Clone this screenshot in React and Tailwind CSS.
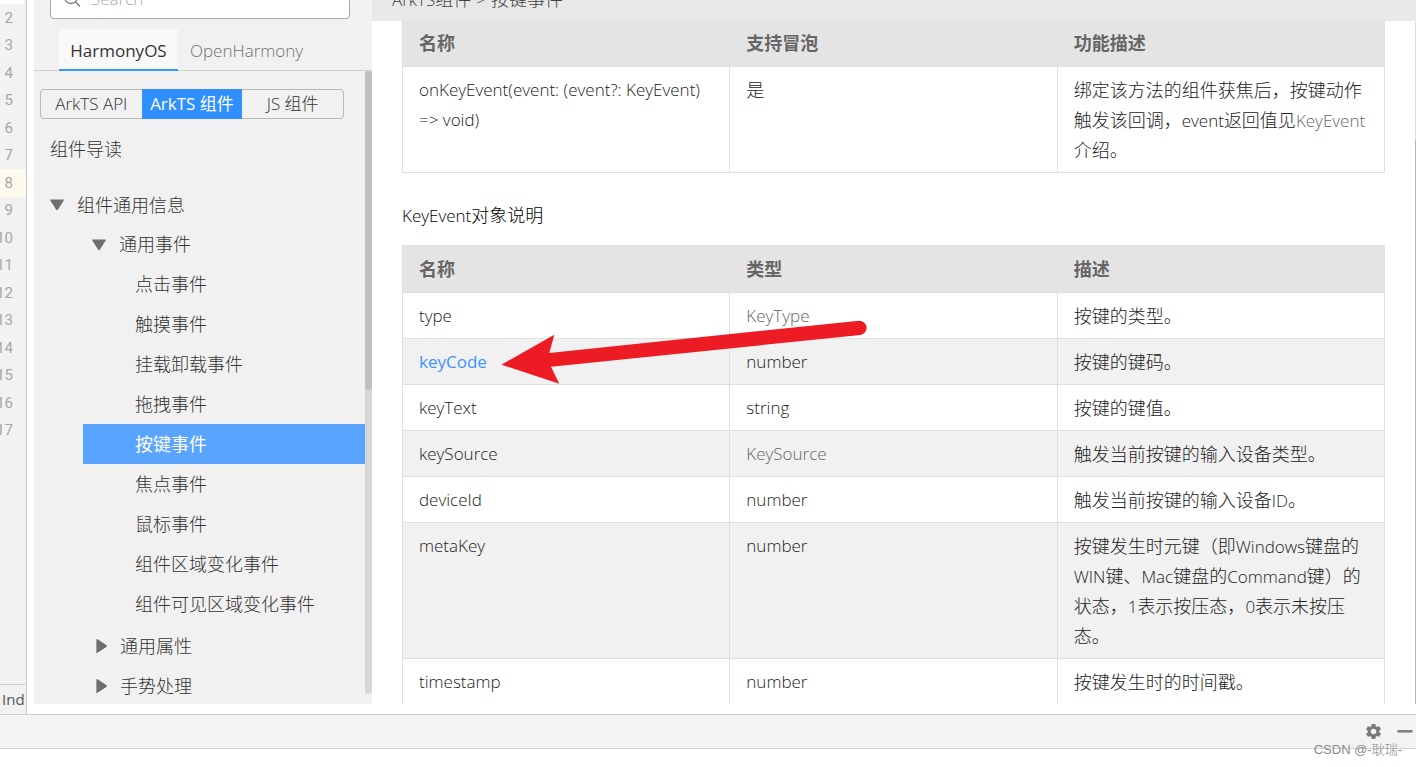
import React, { useState } from "react";
import { MdSettings } from "react-icons/md";

const lineNumbers = [2, 3, 4, 5, 6, 7, 8, 9, 10, 11, 12, 13, 14, 15, 16, 17];

const eventItems = [
  "点击事件",
  "触摸事件",
  "挂载卸载事件",
  "拖拽事件",
  "按键事件",
  "焦点事件",
  "鼠标事件",
  "组件区域变化事件",
  "组件可见区域变化事件",
];

// latin words sit one pixel smaller than the chinese text around them
const Latin = ({ children }) => (
  <span className="text-[17px] leading-none">{children}</span>
);

const keyEventRows = [
  { name: "type", type: "KeyType", typeLink: true, desc: "按键的类型。" },
  { name: "keyCode", nameLink: true, type: "number", desc: "按键的键码。" },
  { name: "keyText", type: "string", desc: "按键的键值。" },
  {
    name: "keySource",
    type: "KeySource",
    typeLink: true,
    desc: "触发当前按键的输入设备类型。",
  },
  {
    name: "deviceId",
    type: "number",
    desc: (
      <>
        触发当前按键的输入设备<Latin>ID</Latin>。
      </>
    ),
  },
  {
    name: "metaKey",
    type: "number",
    desc: (
      <>
        按键发生时元键（即<Latin>Windows</Latin>键盘的<Latin>WIN</Latin>键、
        <Latin>Mac</Latin>键盘的<Latin>Command</Latin>键）的状态，
        <Latin>1</Latin>表示按压态，<Latin>0</Latin>表示未按压态。
      </>
    ),
  },
  { name: "timestamp", type: "number", desc: "按键发生时的时间戳。" },
];

const Triangle = ({ open }) => (
  <svg
    viewBox="0 0 16 16"
    className={open ? "w-4 h-4 shrink-0" : "w-4 h-4 shrink-0 -rotate-90"}
  >
    <path
      d="M1.8 2.4h12.4q1.2 0 .5 1L9 12.4q-1 1.2-2 0L1.3 3.4q-.7-1 .5-1z"
      fill="#6e6e6e"
    />
  </svg>
);

const Gutter = () => (
  <aside className="flex w-[27px] shrink-0 flex-col justify-between overflow-hidden border-r border-[#c9c9c9] bg-[#f2f2f2]">
    <div className="flex flex-col">
      <div className="h-1 w-6 rounded-br bg-white" />
      <ol className="flex h-[440px] flex-col">
        {lineNumbers.map((n) => (
          <li
            key={n}
            className={
              n === 8
                ? "flex flex-1 items-center bg-[#fcfaed]"
                : "flex flex-1 items-center"
            }
          >
            <span className="flex w-[13px] justify-end font-[Roboto] text-[15px] font-normal text-[#a6a6a6]">
              {n}
            </span>
          </li>
        ))}
      </ol>
    </div>
    <div className="flex h-[30px] items-center border-t border-[#d1d1d1] pl-0.5 text-[15px] font-normal text-[#555555]">
      Ind
    </div>
  </aside>
);

const Sidebar = () => {
  const [selected, setSelected] = useState("按键事件");

  return (
    <nav className="flex w-[338px] shrink-0 flex-col overflow-hidden bg-[#f1f1f1] text-[#333333]">
      <label className="-mt-[21px] ml-4 flex h-10 w-[300px] shrink-0 items-center rounded-sm border border-[#a9a9a9] bg-white pl-3">
        <svg viewBox="0 0 20 20" className="h-5 w-5 shrink-0" fill="none">
          <circle cx="8" cy="8" r="6.5" stroke="#777" strokeWidth="1.3" />
          <path d="M12.5 13l4.5 4.5" stroke="#777" strokeWidth="1.3" />
        </svg>
        <input
          type="text"
          aria-label="Search"
          placeholder="Search"
          className="w-full pl-2 text-[17px] outline-none placeholder:text-[#aaaaaa]"
        />
      </label>

      <div className="mt-2.5 flex h-[42px] shrink-0 border-b border-[#cfcfcf] pl-[25px] text-[17px]">
        <button
          type="button"
          className="-mb-px w-[119px] border-b-2 border-[#3d94ff] bg-[#f8f8f8] pt-1 font-normal text-[#333333]"
        >
          HarmonyOS
        </button>
        <button type="button" className="px-3 pt-0.5 text-[#707070]">
          OpenHarmony
        </button>
      </div>

      <div className="flex min-h-0 flex-1">
        <div className="flex min-w-0 flex-1 flex-col overflow-hidden pt-[18px]">
          <div className="mx-1.5 mr-[21px] grid h-[30px] shrink-0 grid-cols-3 rounded-sm border border-[#b9b9b9] text-[17px]">
            <button type="button">ArkTS API</button>
            <button
              type="button"
              className="-my-px bg-[#2f8fff] font-normal text-white"
            >
              ArkTS 组件
            </button>
            <button type="button">JS 组件</button>
          </div>

          <a
            href="#guide"
            className="mt-2.5 flex h-10 shrink-0 items-center pl-4 text-[18px]"
          >
            组件导读
          </a>

          <div className="mt-4 flex h-10 shrink-0 items-center gap-3 pl-[15px] text-[18px]">
            <Triangle open />
            <span>组件通用信息</span>
          </div>
          <div className="flex h-[39px] shrink-0 items-center gap-3 pl-[57px] text-[18px]">
            <Triangle open />
            <span>通用事件</span>
          </div>

          <ul className="shrink-0 pl-[49px]">
            {eventItems.map((item) => (
              <li key={item}>
                <button
                  type="button"
                  onClick={() => setSelected(item)}
                  className={
                    item === selected
                      ? "flex h-10 w-full items-center bg-[#59a4ff] pl-13 text-[18px] font-normal text-white"
                      : "flex h-10 w-full items-center pl-13 text-[18px]"
                  }
                >
                  {item}
                </button>
              </li>
            ))}
          </ul>

          <div className="mt-0.5 flex h-10 shrink-0 items-center gap-2.5 pl-[60px] text-[18px]">
            <Triangle />
            <span>通用属性</span>
          </div>
          <div className="flex h-10 shrink-0 items-center gap-2.5 pl-[60px] text-[18px]">
            <Triangle />
            <span>手势处理</span>
          </div>
        </div>

        {/* scrollbar */}
        <div className="mb-2.5 w-[7px] shrink-0 rounded-b bg-[#d6d6d6]">
          <div className="h-[319px] rounded bg-[#bfbfbf]" />
        </div>
      </div>
    </nav>
  );
};

const Th = ({ children }) => (
  <th className="border border-[#dfdfdf] px-4 py-2 text-left text-[18px] leading-[30px] font-bold text-[#666666]">
    {children}
  </th>
);

const Td = ({ children, cjk }) => (
  <td
    className={
      cjk
        ? "border border-[#dfdfdf] px-4 pt-2 pb-[7px] align-top text-[18px] leading-[30px]"
        : "border border-[#dfdfdf] px-4 pt-2 pb-[7px] align-top text-[17px] leading-[30px]"
    }
  >
    {children}
  </td>
);

const Content = () => (
  <main className="flex min-w-0 flex-1 flex-col overflow-hidden">
    <div className="flex h-[21px] shrink-0 items-end bg-[#e8e8e8] pl-5">
      <p className="mb-2.5 text-[18px] leading-6 text-[#444444]">
        <Latin>ArkTS</Latin>组件 &gt; 按键事件
      </p>
    </div>

    <div className="flex min-h-0 flex-1">
      <div className="min-w-0 flex-1 overflow-hidden pr-[30px] pl-[30px] text-[#222222]">
        <table className="-mt-0.5 w-full table-fixed border-collapse">
          <thead>
            <tr className="bg-[#e4e4e4]">
              <Th>名称</Th>
              <Th>支持冒泡</Th>
              <Th>功能描述</Th>
            </tr>
          </thead>
          <tbody>
            <tr>
              <Td>onKeyEvent(event: (event?: KeyEvent) =&gt; void)</Td>
              <Td cjk>是</Td>
              <Td cjk>
                绑定该方法的组件获焦后，按键动作触发该回调，
                <Latin>event</Latin>返回值见
                <a href="#keyevent" className="text-[#666666]">
                  <Latin>KeyEvent</Latin>
                </a>
                介绍。
              </Td>
            </tr>
          </tbody>
        </table>

        <p
          id="keyevent"
          className="mt-[27px] mb-[15px] text-[18px] leading-[30px] text-black"
        >
          <Latin>KeyEvent</Latin>对象说明
        </p>

        <div className="relative">
          <table className="w-full table-fixed border-collapse">
            <thead>
              <tr className="bg-[#e4e4e4]">
                <Th>名称</Th>
                <Th>类型</Th>
                <Th>描述</Th>
              </tr>
            </thead>
            <tbody>
              {keyEventRows.map((row) => (
                <tr key={row.name} className="even:bg-[#f1f1f1]">
                  <Td>
                    {row.nameLink ? (
                      <a href="#keycode" className="font-normal text-[#3d94ff]">
                        {row.name}
                      </a>
                    ) : (
                      row.name
                    )}
                  </Td>
                  <Td>
                    {row.typeLink ? (
                      <a href="#keytype" className="text-[#666666]">
                        {row.type}
                      </a>
                    ) : (
                      row.type
                    )}
                  </Td>
                  <Td cjk>{row.desc}</Td>
                </tr>
              ))}
            </tbody>
          </table>

          {/* arrow pointing at keyCode */}
          <svg
            viewBox="0 0 370 70"
            className="pointer-events-none absolute top-[73px] left-[97px] h-[70px] w-[370px]"
          >
            <path
              d="M2.5 46.7L55.3 16.7L50.3 35L360 2.7A7.2 7.2 0 0 1 361.5 17L52 48.7L60.3 65.7Z"
              fill="#ed1c24"
            />
          </svg>
        </div>
      </div>

      <div className="w-px shrink-0 bg-[#dddddd] pt-[119px]">
        <div className="h-full bg-[#b5b5b5]" />
      </div>
    </div>
  </main>
);

const App = () => (
  <div className="flex h-screen flex-col overflow-hidden bg-white font-['Open_Sans','Noto_Sans_CJK_SC',sans-serif] font-light">
    <div className="flex min-h-0 flex-1">
      <Gutter />
      <div className="flex min-w-0 flex-1 pb-2.5 pl-[7px]">
        <Sidebar />
        <Content />
      </div>
    </div>

    <footer className="relative shrink-0 pb-[18px]">
      <div className="flex h-[35px] items-center justify-end gap-3.5 border-y border-[#d1d1d1] bg-[#f3f3f3] pr-[3px]">
        <button type="button" aria-label="Settings">
          <MdSettings className="h-[19px] w-[19px] text-[#7a7a7a]" />
        </button>
        <button type="button" aria-label="Hide">
          <svg viewBox="0 0 16 16" className="h-4 w-4">
            <path d="M0.5 6h15v2.6h-15z" fill="#7f7f7f" />
          </svg>
        </button>
      </div>
      <span className="absolute right-3.5 bottom-[7px] font-['Liberation_Sans','Noto_Sans_CJK_SC',sans-serif] text-[13px] leading-5 text-[#8c8c8c]">
        CSDN @-耿瑞-
      </span>
    </footer>
  </div>
);

export default App;
